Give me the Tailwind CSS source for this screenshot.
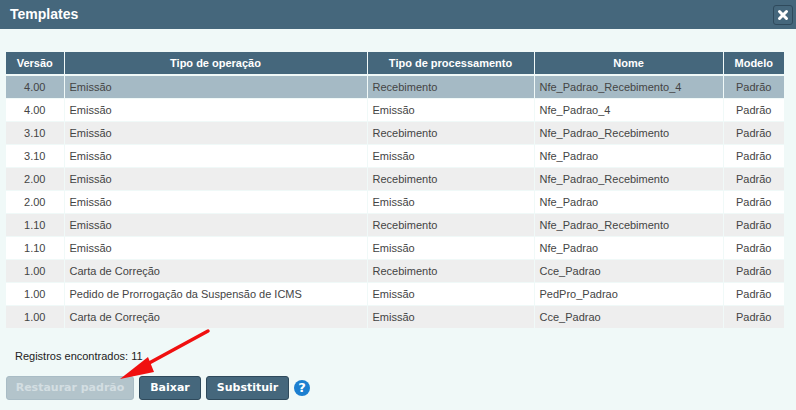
<!DOCTYPE html>
<html>
<head>
<meta charset="utf-8">
<title>Templates</title>
<script src="https://cdn.jsdelivr.net/npm/@tailwindcss/browser@4"></script>
</head>
<body class="bg-[#f0f9f8] font-['Liberation_Sans',Arial,sans-serif] overflow-hidden">
<div class="relative w-[796px] h-[410px] overflow-hidden">
    <!-- Header -->
    <div class="flex items-center justify-between h-[29px] bg-[#45677c] pl-[10px] pr-[3px]">
        <h1 class="text-[14px] font-bold text-white">Templates</h1>
        <button class="flex items-center justify-center w-[20px] h-[20px] rounded-[3px] border border-[#2f4a5c] bg-[#45677c]">
            <svg width="12" height="12" viewBox="0 0 12 12"><path d="M2.5 2.5 L9.5 9.5 M9.5 2.5 L2.5 9.5" stroke="#fff" stroke-width="3" stroke-linecap="round"/></svg>
        </button>
    </div>

    <!-- Table -->
    <div class="pt-[23px] pl-[6px]">
        <table class="table-fixed w-[778px] border-collapse text-[11px]/[22px] text-[#444]">
            <colgroup>
                <col class="w-[58px]"><col class="w-[303px]"><col class="w-[167px]"><col class="w-[189px]"><col class="w-[61px]">
            </colgroup>
            <thead>
                <tr class="h-[22px] bg-[#45677c] text-white font-bold text-center">
                    <th class="border-r border-b-2 border-r-[#f0f9f8] border-b-[#f0f9f8]">Versão</th>
                    <th class="border-r border-b-2 border-r-[#f0f9f8] border-b-[#f0f9f8]">Tipo de operação</th>
                    <th class="border-r border-b-2 border-r-[#f0f9f8] border-b-[#f0f9f8]">Tipo de processamento</th>
                    <th class="border-r border-b-2 border-r-[#f0f9f8] border-b-[#f0f9f8]">Nome</th>
                    <th class="border-b-2 border-b-[#f0f9f8]">Modelo</th>
                </tr>
            </thead>
            <tbody id="rows">
                <tr class="h-[23px] bg-[#a5bac5]"><td class="text-center border-r border-b border-[#f0f9f8]">4.00</td><td class="pl-[5px] border-r border-b border-[#f0f9f8]">Emissão</td><td class="pl-[5px] border-r border-b border-[#f0f9f8]">Recebimento</td><td class="pl-[5px] border-r border-b border-[#f0f9f8]">Nfe_Padrao_Recebimento_4</td><td class="text-center border-b border-[#f0f9f8]">Padrão</td></tr>
                <tr class="h-[23px] bg-white"><td class="text-center border-r border-b border-[#f0f9f8]">4.00</td><td class="pl-[5px] border-r border-b border-[#f0f9f8]">Emissão</td><td class="pl-[5px] border-r border-b border-[#f0f9f8]">Emissão</td><td class="pl-[5px] border-r border-b border-[#f0f9f8]">Nfe_Padrao_4</td><td class="text-center border-b border-[#f0f9f8]">Padrão</td></tr>
                <tr class="h-[23px] bg-[#eeeeee]"><td class="text-center border-r border-b border-[#f0f9f8]">3.10</td><td class="pl-[5px] border-r border-b border-[#f0f9f8]">Emissão</td><td class="pl-[5px] border-r border-b border-[#f0f9f8]">Recebimento</td><td class="pl-[5px] border-r border-b border-[#f0f9f8]">Nfe_Padrao_Recebimento</td><td class="text-center border-b border-[#f0f9f8]">Padrão</td></tr>
                <tr class="h-[23px] bg-white"><td class="text-center border-r border-b border-[#f0f9f8]">3.10</td><td class="pl-[5px] border-r border-b border-[#f0f9f8]">Emissão</td><td class="pl-[5px] border-r border-b border-[#f0f9f8]">Emissão</td><td class="pl-[5px] border-r border-b border-[#f0f9f8]">Nfe_Padrao</td><td class="text-center border-b border-[#f0f9f8]">Padrão</td></tr>
                <tr class="h-[23px] bg-[#eeeeee]"><td class="text-center border-r border-b border-[#f0f9f8]">2.00</td><td class="pl-[5px] border-r border-b border-[#f0f9f8]">Emissão</td><td class="pl-[5px] border-r border-b border-[#f0f9f8]">Recebimento</td><td class="pl-[5px] border-r border-b border-[#f0f9f8]">Nfe_Padrao_Recebimento</td><td class="text-center border-b border-[#f0f9f8]">Padrão</td></tr>
                <tr class="h-[23px] bg-white"><td class="text-center border-r border-b border-[#f0f9f8]">2.00</td><td class="pl-[5px] border-r border-b border-[#f0f9f8]">Emissão</td><td class="pl-[5px] border-r border-b border-[#f0f9f8]">Emissão</td><td class="pl-[5px] border-r border-b border-[#f0f9f8]">Nfe_Padrao</td><td class="text-center border-b border-[#f0f9f8]">Padrão</td></tr>
                <tr class="h-[23px] bg-[#eeeeee]"><td class="text-center border-r border-b border-[#f0f9f8]">1.10</td><td class="pl-[5px] border-r border-b border-[#f0f9f8]">Emissão</td><td class="pl-[5px] border-r border-b border-[#f0f9f8]">Recebimento</td><td class="pl-[5px] border-r border-b border-[#f0f9f8]">Nfe_Padrao_Recebimento</td><td class="text-center border-b border-[#f0f9f8]">Padrão</td></tr>
                <tr class="h-[23px] bg-white"><td class="text-center border-r border-b border-[#f0f9f8]">1.10</td><td class="pl-[5px] border-r border-b border-[#f0f9f8]">Emissão</td><td class="pl-[5px] border-r border-b border-[#f0f9f8]">Emissão</td><td class="pl-[5px] border-r border-b border-[#f0f9f8]">Nfe_Padrao</td><td class="text-center border-b border-[#f0f9f8]">Padrão</td></tr>
                <tr class="h-[23px] bg-[#eeeeee]"><td class="text-center border-r border-b border-[#f0f9f8]">1.00</td><td class="pl-[5px] border-r border-b border-[#f0f9f8]">Carta de Correção</td><td class="pl-[5px] border-r border-b border-[#f0f9f8]">Recebimento</td><td class="pl-[5px] border-r border-b border-[#f0f9f8]">Cce_Padrao</td><td class="text-center border-b border-[#f0f9f8]">Padrão</td></tr>
                <tr class="h-[23px] bg-white"><td class="text-center border-r border-b border-[#f0f9f8]">1.00</td><td class="pl-[5px] border-r border-b border-[#f0f9f8]">Pedido de Prorrogação da Suspensão de ICMS</td><td class="pl-[5px] border-r border-b border-[#f0f9f8]">Emissão</td><td class="pl-[5px] border-r border-b border-[#f0f9f8]">PedPro_Padrao</td><td class="text-center border-b border-[#f0f9f8]">Padrão</td></tr>
                <tr class="h-[23px] bg-[#eeeeee]"><td class="text-center border-r border-b border-[#f0f9f8]">1.00</td><td class="pl-[5px] border-r border-b border-[#f0f9f8]">Carta de Correção</td><td class="pl-[5px] border-r border-b border-[#f0f9f8]">Emissão</td><td class="pl-[5px] border-r border-b border-[#f0f9f8]">Cce_Padrao</td><td class="text-center border-b border-[#f0f9f8]">Padrão</td></tr>
            </tbody>
        </table>

        <p class="mt-[21px] pl-[9px] text-[11px]/[13px] text-[#222]">Registros encontrados: 11</p>

        <!-- Actions -->
        <div class="flex items-center gap-[5px] mt-[13px] font-['DejaVu_Sans',sans-serif] text-[11px] font-bold">
            <button class="h-[24px] w-[128px] rounded-[3px] border border-[#a9bcc5] bg-[#b3c4cb] text-[#d3dee2]">Restaurar padrão</button>
            <button class="h-[24px] w-[62px] rounded-[3px] border border-[#2f4a5c] bg-[#45677c] text-white">Baixar</button>
            <button class="h-[24px] w-[83px] rounded-[3px] border border-[#2f4a5c] bg-[#45677c] text-white">Substituir</button>
            <span class="flex items-center justify-center w-[16px] h-[16px] rounded-full bg-[#1c7fd0] text-white text-[13px]">?</span>
        </div>
    </div>

    <!-- Red arrow annotation -->
    <svg class="absolute left-0 top-0" width="796" height="410" viewBox="0 0 796 410">
        <path d="M208 331 L140 368" stroke="#f01010" stroke-width="3.5" stroke-linecap="round"/>
        <polygon points="120,379 148,357 154,372" fill="#f01010"/>
    </svg>
</div>
</body>
</html>
